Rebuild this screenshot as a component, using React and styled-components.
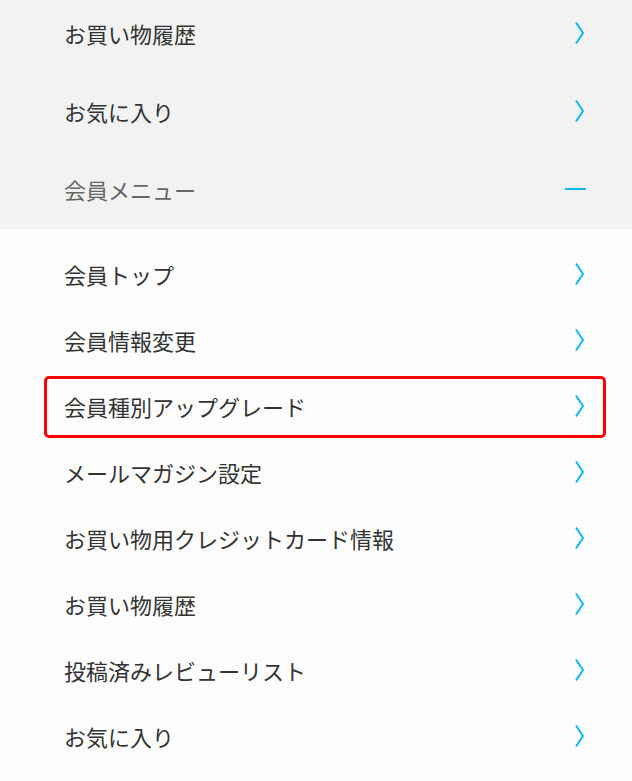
import React from "react";
import styled, { createGlobalStyle } from "styled-components";

const GlobalStyle = createGlobalStyle`
  html, body {
    margin: 0;
    padding: 0;
    background: #fdfdfd;
    font-family: "Noto Sans CJK JP", "Noto Sans", sans-serif;
  }
`;

const Page = styled.div`
  width: 632px;
  height: 781px;
  overflow: hidden;
  background: #fdfdfd;
`;

const TopMenu = styled.ul`
  list-style: none;
  margin: -5px 0 0;
  padding: 0;
  background: #f2f2f2;
`;

const SubMenu = styled.ul`
  list-style: none;
  margin: 0;
  padding: 13px 0 0;
  background: #fdfdfd;
`;

const Row = styled.li`
  position: relative;
  display: flex;
  align-items: center;
  justify-content: space-between;
  box-sizing: border-box;
  height: ${(p) => (p.$tall ? "78px" : "66px")};
  padding: 0 46px 2px 64px;
  font-size: 22px;
  line-height: 1;
  color: ${(p) => (p.$muted ? "#666" : "#333")};
`;

const Highlight = styled.span`
  position: absolute;
  left: 44px;
  right: 26px;
  top: 2px;
  bottom: 2px;
  border: 3px solid #f00;
  border-radius: 5px;
  pointer-events: none;
`;

const Chevron = () => (
  <svg width="12" height="24" viewBox="0 0 12 24">
    <path d="M2 1.5 L9 12 L2 22.5" fill="none" stroke="#0cbaf1" strokeWidth="2" />
  </svg>
);

const Minus = styled.span`
  display: block;
  width: 21px;
  height: 2px;
  background: #0cbaf1;
`;

const topItems = ["お買い物履歴", "お気に入り"];
const memberItems = [
  "会員トップ",
  "会員情報変更",
  "会員種別アップグレード",
  "メールマガジン設定",
  "お買い物用クレジットカード情報",
  "お買い物履歴",
  "投稿済みレビューリスト",
  "お気に入り",
];

const App = () => {
  return (
    <Page>
      <GlobalStyle />
      <TopMenu>
        {topItems.map((t) => (
          <Row key={t} $tall>
            <span>{t}</span>
            <Chevron />
          </Row>
        ))}
        <Row $tall $muted>
          <span>会員メニュー</span>
          <Minus />
        </Row>
      </TopMenu>
      <SubMenu>
        {memberItems.map((t, i) => (
          <Row key={i}>
            <span>{t}</span>
            <Chevron />
            {i === 2 && <Highlight />}
          </Row>
        ))}
      </SubMenu>
    </Page>
  );
};

export default App;
